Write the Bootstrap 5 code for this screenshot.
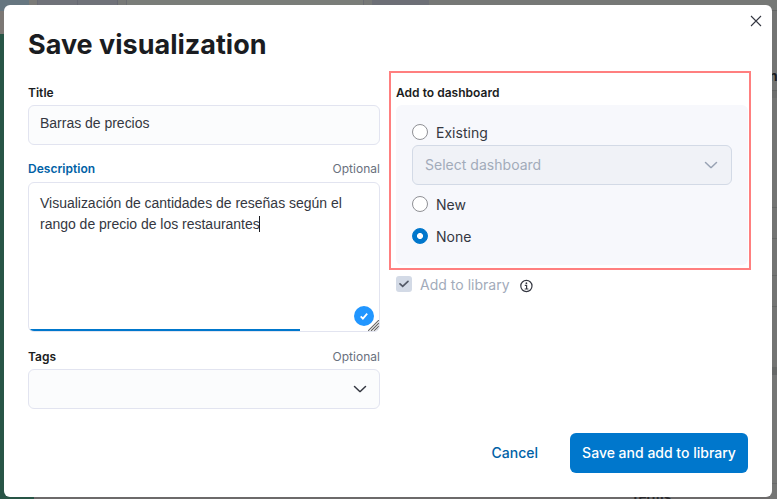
<!DOCTYPE html>
<html lang="es">
<head>
<meta charset="utf-8">
<meta name="viewport" content="width=device-width, initial-scale=1">
<title>Save visualization</title>
<link href="https://cdn.jsdelivr.net/npm/bootstrap@5.3.0/dist/css/bootstrap.min.css" rel="stylesheet">
<style>
body{font:400 14px/20px Inter,sans-serif;letter-spacing:.02px;color:#343741;width:777px;height:499px;overflow:hidden;
background:
linear-gradient(#667680,#667680) 0 0/29px 11px no-repeat,
linear-gradient(#7b7774,#7b7774) 0 11px/37px 23px no-repeat,
linear-gradient(#285546,#285546) 0 34px/34px 465px no-repeat,
linear-gradient(90deg,#7a7a77 0 8px,#696b75 8px 9px,#707279 9px 48px,#666872 48px 49px,#707279 49px 88px,#666872 88px 89px,#777977 89px 97px,#6b6d72 97px 98px,#7a7d79 98px 334px,#6b6d72 334px 335px,#777977 335px 343px,#6d6f76 343px 400px,#767876 400px) 29px 0/748px 10px no-repeat,
linear-gradient(#767876 0 10px,#646665 10px 11px,#737473 11px 90px,#626463 90px 91px,#6d6e6d 91px 98px,#737473 98px 207px,#656766 207px 208px,#737473 208px 238px,#656766 238px 239px,#737473 239px 275px,#656766 275px 276px,#737473 276px 306px,#656766 306px 307px,#737473 307px 367px,#666867 367px 375px,#757675 375px 483px,#686969 483px 484px,#757675 484px) 770px 0/7px 499px no-repeat,
#6c6a6a}
.behind{position:absolute;font-weight:700;color:#1b1c20;z-index:0}
.behind-n{left:769px;top:66px}
.behind-terms{left:631px;top:487px;font-size:13px;color:#2b2b2e}
.dialog-box{position:relative;z-index:1;width:768px;height:492px;margin:5px 0 0 4px;padding:24px;border-radius:6px;background:#fff}
.close-x{position:absolute;right:9px;top:9px;width:14px;height:14px;border:0;background:none;padding:0;line-height:0}
.dialog-title{font-size:27px;line-height:32px;font-weight:700;letter-spacing:0;color:#1a1c21;margin:0 0 24px}
.field-label{font-size:12px;line-height:16px;font-weight:600;color:#1a1c21;height:20px}
.field-label .opt{font-weight:400;color:#69707d}
.field-label .focus-label{color:#0061a6}
.field-cols{display:grid;grid-template-columns:352px 352px;gap:16px;height:324px}
.field-box{height:40px;border:1px solid #e2e4f0;border-radius:6px;background:#fbfcfd;padding:0 11px;color:#343741}
.input-font{font-family:"Liberation Sans",Arial,sans-serif;letter-spacing:-.015px}
.desc-label{height:21px;margin-top:16px}
.tags-label{margin-top:17px}
.desc-box{position:relative;height:150px;border:1px solid #e2e4f0;border-radius:6px;padding:10px 11px;line-height:21px;overflow:hidden;
background:linear-gradient(#0077cc,#0077cc) 0 100%/271px 2px no-repeat,#fff}
.text-caret{display:inline-block;width:1px;height:16px;margin-left:-1px;background:#1a1c21;vertical-align:-3px}
.ok-badge{position:absolute;right:5px;bottom:5px;width:20px;height:20px}
.resize-grip{position:absolute;right:0;bottom:0;width:11px;height:11px}
.choice-panel{height:160px;background:#f7f8fc;border-radius:6px;padding:16px}
.choice{height:24px;line-height:24px}
.choice .form-check-input{width:16px;height:16px;margin:3px 8px 0 0;border:1px solid #8f9095;background-color:#fff;flex:none;float:none}
.choice .form-check-input:checked{background:radial-gradient(circle,#fff 0 2.6px,#0077cc 3.4px);border-color:#0077cc}
.select-off{background:#f0f2f7;border-color:#d3dae6;color:#a2abba;padding:0 12px}
.outline-red{position:absolute;left:385px;top:66px;width:362px;height:199px;border:2px solid #ff7f7f;pointer-events:none}
.lib-row{margin-top:8px;height:24px;color:#a2abba}
.lib-check{margin:0 8px 2px 0}
.lib-info{margin:2px 0 0 8px}
.dialog-actions{margin-top:24px}
.dialog-actions .btn{height:40px;padding:0 12px;border:0;border-radius:6px;font:500 14px/40px Inter,sans-serif;letter-spacing:0}
.btn-cancel{color:#0061a6}
.btn-save{background:#0077cc;color:#fff;width:178px;margin-left:20px}
</style>
<script src="https://cdn.jsdelivr.net/npm/bootstrap@5.3.0/dist/js/bootstrap.bundle.min.js"></script>
</head>
<body>
<div class="behind behind-n">n</div>
<div class="behind behind-terms">Terms</div>
<div class="dialog-box" role="dialog">
  <button class="close-x" aria-label="Close"><svg width="14" height="14" fill="none" stroke="#343741" stroke-width="1.1"><path d="M2 2l10 10M12 2L2 12"/></svg></button>
  <h1 class="dialog-title">Save visualization</h1>
  <div class="field-cols">
    <div>
      <div class="field-label">Title</div>
      <div class="field-box input-font d-flex align-items-center"><span class="pb-1">Barras de precios</span></div>
      <div class="field-label desc-label d-flex justify-content-between"><span class="focus-label">Description</span><span class="opt">Optional</span></div>
      <div class="desc-box input-font">Visualización de cantidades de reseñas según el<br>rango de precio de los restaurantes<span class="text-caret"></span>
        <svg class="ok-badge" viewBox="0 0 20 20"><circle cx="10" cy="10" r="10" fill="#2196ff"/><path d="M6.7 10.4l2.2 2.2 4.3-4.9" fill="none" stroke="#fff" stroke-width="1.8"/></svg>
        <svg class="resize-grip" viewBox="0 0 11 11"><path d="M0 11L11 0M3 11l8-8M6 11l5-5M9 11l2-2" stroke="#666" stroke-width="1.1"/></svg>
      </div>
      <div class="field-label tags-label d-flex justify-content-between"><span>Tags</span><span class="opt">Optional</span></div>
      <div class="field-box d-flex align-items-center justify-content-end"><svg width="16" height="16" fill="none" stroke="#343741" stroke-width="1.5" stroke-linecap="round" stroke-linejoin="round"><path d="M2.5 5.5l5 4.7q.5.5 1 0l5-4.7"/></svg></div>
    </div>
    <div>
      <div class="field-label">Add to dashboard</div>
      <div class="choice-panel">
        <label class="choice d-flex"><input class="form-check-input" type="radio" name="dash"><span>Existing</span></label>
        <div class="field-box select-off d-flex align-items-center justify-content-between"><span>Select dashboard</span><svg width="16" height="16" fill="none" stroke="#98a2b3" stroke-width="1.5" stroke-linecap="round" stroke-linejoin="round"><path d="M2.5 5.5l5 4.7q.5.5 1 0l5-4.7"/></svg></div>
        <label class="choice d-flex mt-2"><input class="form-check-input" type="radio" name="dash"><span>New</span></label>
        <label class="choice d-flex mt-2"><input class="form-check-input" type="radio" name="dash" checked><span>None</span></label>
      </div>
      <div class="lib-row d-flex align-items-center">
        <svg class="lib-check" width="16" height="16"><rect width="16" height="16" rx="3" fill="#d3dae6"/><path d="M4 7.8l2.7 2.6L12 5.3" fill="none" stroke="#535966" stroke-width="1.7" stroke-linecap="round"/></svg>
        <span>Add to library</span>
        <svg class="lib-info" width="16" height="16" fill="none" stroke="#343741"><circle cx="8.4" cy="8" r="5.6" stroke-width="1.2"/><path d="M6.8 7.4h1.8V11M6.7 11h3.7" stroke-width="1.2"/><circle cx="8.4" cy="5.2" r=".9" fill="#343741" stroke="none"/></svg>
      </div>
    </div>
  </div>
  <div class="dialog-actions d-flex justify-content-end">
    <button class="btn btn-cancel">Cancel</button>
    <button class="btn btn-save">Save and add to library</button>
  </div>
  <div class="outline-red"></div>
</div>
</body>
</html>
